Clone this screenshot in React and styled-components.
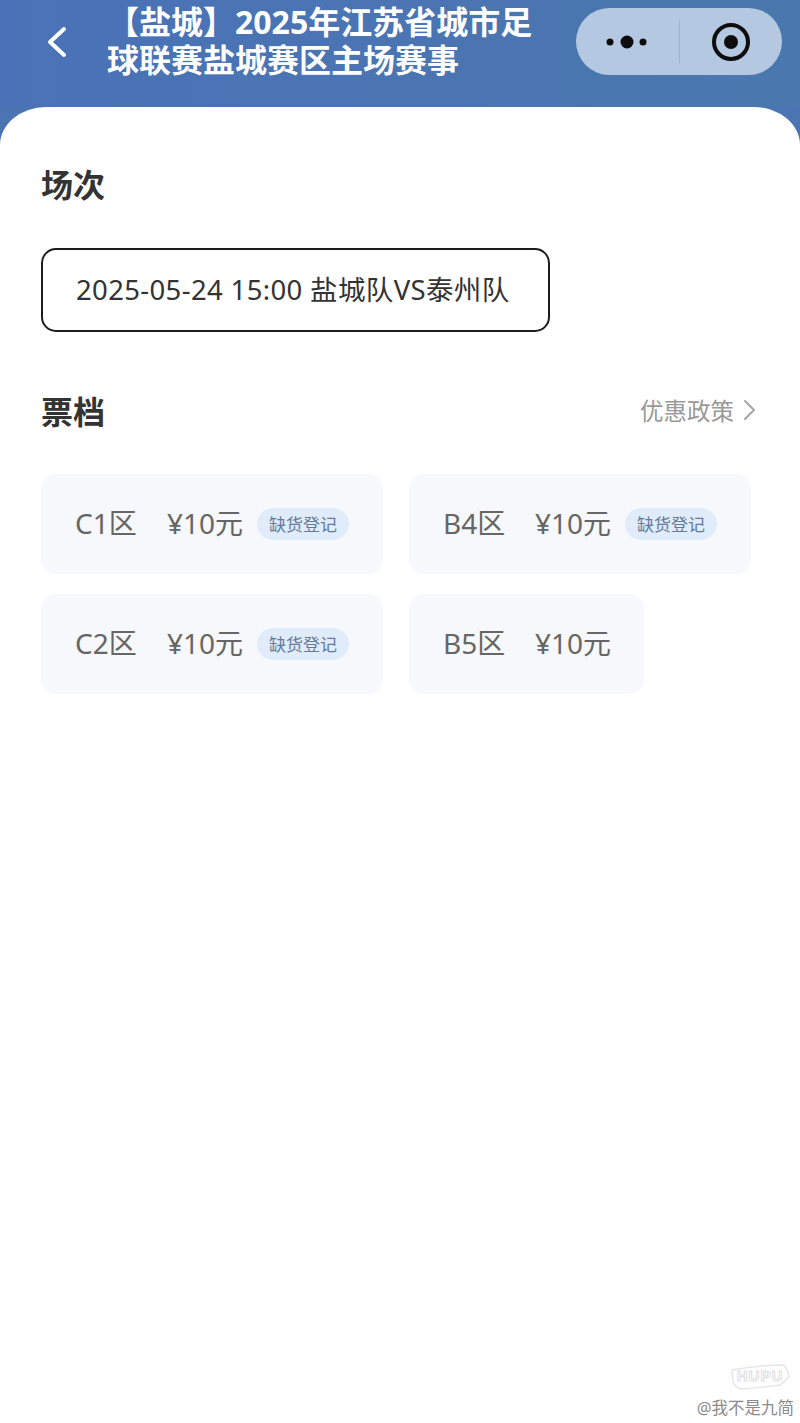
import React from 'react';
import styled, { createGlobalStyle } from 'styled-components';

const GlobalStyle = createGlobalStyle`
  html, body {
    margin: 0;
    padding: 0;
    background: #ffffff;
  }
  * {
    box-sizing: border-box;
  }
`;

const fontStack = `"Noto Sans", "Noto Sans CJK SC", sans-serif`;

const Page = styled.div`
  position: relative;
  width: 800px;
  height: 1423px;
  overflow: hidden;
  display: flex;
  flex-direction: column;
  font-family: ${fontStack};
  background: #4a74b2;
`;

const Header = styled.div`
  height: 107px;
  flex-shrink: 0;
  display: flex;
  align-items: flex-start;
  padding: 3px 18px 0 46px;
  background: linear-gradient(90deg, #4a72b8 0%, #4a75b1 60%, #4a78ae 100%);
`;

const BackButton = styled.div`
  width: 22px;
  height: 34px;
  margin-top: 22px;
  flex-shrink: 0;
  color: #ffffff;
`;

const Title = styled.h1`
  margin: 0 0 0 39px;
  width: 450px;
  font-size: 32px;
  line-height: 38px;
  font-weight: 700;
  color: #ffffff;
  white-space: pre;
`;

const Capsule = styled.div`
  margin-top: 5px;
  margin-left: auto;
  width: 206px;
  height: 67px;
  border-radius: 34px;
  background: #b5c8e1;
  display: flex;
  align-items: center;
`;

const CapsuleSide = styled.div`
  flex: 1;
  display: flex;
  justify-content: center;
  align-items: center;
`;

const CapsuleDivider = styled.div`
  width: 1px;
  height: 42px;
  background: #9fb1ca;
`;

const Sheet = styled.div`
  flex: 1;
  background: #ffffff;
  border-radius: 46px 46px 0 0 / 38px 38px 0 0;
  padding: 57px 44px 0 41px;
`;

const SectionTitle = styled.h2`
  margin: 0;
  font-size: 32px;
  line-height: 42px;
  font-weight: 700;
  color: #333333;
`;

const SessionChip = styled.div`
  margin-top: 42px;
  width: 509px;
  height: 84px;
  padding: 0 0 4px 33px;
  border: 2px solid #1c1c1c;
  border-radius: 15px;
  display: flex;
  align-items: center;
  font-size: 27.5px;
  letter-spacing: 0.35px;
  color: #333333;
  white-space: nowrap;
`;

const SectionHead = styled.div`
  margin-top: 59px;
  display: flex;
  align-items: center;
  justify-content: space-between;
`;

const PolicyLink = styled.div`
  display: flex;
  align-items: center;
  gap: 9px;
  margin-bottom: 4px;
  font-size: 23.5px;
  color: #999999;
`;

const TicketGrid = styled.div`
  margin-top: 41px;
  display: flex;
  flex-wrap: wrap;
  gap: 20px 26px;
`;

const Ticket = styled.div`
  height: 100px;
  padding: 0 34px 4px;
  border-radius: 15px;
  background: #f6f8fb;
  display: flex;
  align-items: center;
  font-size: 28px;
  color: #666666;
  white-space: nowrap;
`;

const Area = styled.span`
  width: 92px;
`;

const Price = styled.span`
  width: 75px;
`;

const Badge = styled.span`
  margin-left: 15px;
  width: 92px;
  height: 32px;
  margin-top: 4px;
  padding-bottom: 1px;
  border-radius: 16px;
  background: #e1ecfb;
  display: flex;
  align-items: center;
  justify-content: center;
  font-size: 17px;
  color: #65799a;
`;

const WatermarkLogo = styled.div`
  position: absolute;
  left: 730px;
  top: 1364px;
  width: 60px;
  height: 26px;
  color: #e6e6e6;
`;

const LogoText = styled.span`
  position: absolute;
  left: 0;
  right: 0;
  top: 2px;
  text-align: center;
  font-family: "Liberation Sans", sans-serif;
  font-size: 15px;
  line-height: 20px;
  font-weight: 700;
  letter-spacing: 1px;
  color: #ffffff;
  -webkit-text-stroke: 1px #dedede;
`;

const Watermark = styled.div`
  position: absolute;
  right: 6px;
  bottom: 5px;
  font-size: 16.5px;
  line-height: 20px;
  color: #8a8a8a;
`;

const tickets = [
  { area: 'C1区', soldOut: true },
  { area: 'B4区', soldOut: true },
  { area: 'C2区', soldOut: true },
  { area: 'B5区', soldOut: false },
];

const App = () => {
  return (
    <>
      <GlobalStyle />
      <Page>
        <Header>
          <BackButton>
            <svg width="22" height="34" viewBox="0 0 22 34" fill="none">
              <path d="M18 4 L4 17 L18 30" stroke="currentColor" strokeWidth="4" strokeLinecap="round" strokeLinejoin="round" />
            </svg>
          </BackButton>
          <Title>{'【盐城】2025年江苏省城市足\n球联赛盐城赛区主场赛事'}</Title>
          <Capsule>
            <CapsuleSide>
              <svg width="42" height="14" viewBox="0 0 42 14" fill="#0d0d0d">
                <circle cx="4" cy="7" r="3.5" />
                <circle cx="21" cy="7" r="6.5" />
                <circle cx="37" cy="7" r="3.5" />
              </svg>
            </CapsuleSide>
            <CapsuleDivider />
            <CapsuleSide>
              <svg width="40" height="40" viewBox="0 0 40 40" fill="none">
                <circle cx="20" cy="20" r="17" stroke="#0d0d0d" strokeWidth="4" />
                <circle cx="20" cy="20" r="7" fill="#0d0d0d" />
              </svg>
            </CapsuleSide>
          </Capsule>
        </Header>
        <Sheet>
          <SectionTitle>场次</SectionTitle>
          <SessionChip>2025-05-24 15:00 盐城队VS泰州队</SessionChip>
          <SectionHead>
            <SectionTitle>票档</SectionTitle>
            <PolicyLink>
              优惠政策
              <svg width="13" height="22" viewBox="0 0 13 22" fill="none">
                <path d="M2 2 L11 11 L2 20" stroke="#a6a6a6" strokeWidth="2" strokeLinecap="round" strokeLinejoin="round" />
              </svg>
            </PolicyLink>
          </SectionHead>
          <TicketGrid>
            {tickets.map((t) => (
              <Ticket key={t.area}>
                <Area>{t.area}</Area>
                <Price>¥10元</Price>
                {t.soldOut && <Badge>缺货登记</Badge>}
              </Ticket>
            ))}
          </TicketGrid>
        </Sheet>
        <WatermarkLogo>
          <svg width="60" height="26" viewBox="0 0 60 26" fill="none">
            <path d="M2 6 Q28 1 54 1 Q58 6 59 12 Q56 17 50 21 Q30 24 11 25 Q5 23 3 18 Z" stroke="currentColor" strokeWidth="1.5" strokeLinejoin="round" />
          </svg>
          <LogoText>HUPU</LogoText>
        </WatermarkLogo>
        <Watermark>@我不是九简</Watermark>
      </Page>
    </>
  );
};

export default App;
